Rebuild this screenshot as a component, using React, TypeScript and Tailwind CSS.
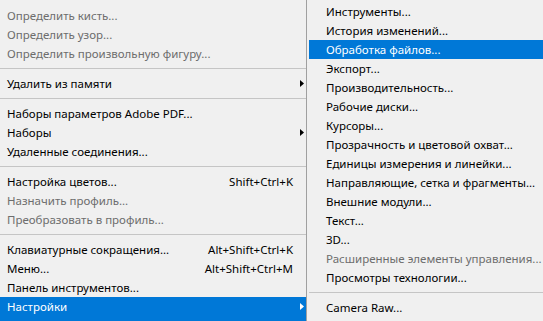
import React from "react";

type Item =
  | { sep: true }
  | { label: string; shortcut?: string; disabled?: boolean; sub?: boolean; active?: boolean; tall?: boolean };

const leftItems: Item[] = [
  { label: "Определить кисть...", disabled: true },
  { label: "Определить узор...", disabled: true },
  { label: "Определить произвольную фигуру...", disabled: true },
  { sep: true },
  { label: "Удалить из памяти", sub: true },
  { sep: true },
  { label: "Наборы параметров Adobe PDF..." },
  { label: "Наборы", sub: true },
  { label: "Удаленные соединения..." },
  { sep: true },
  { label: "Настройка цветов...", shortcut: "Shift+Ctrl+K" },
  { label: "Назначить профиль...", disabled: true },
  { label: "Преобразовать в профиль...", disabled: true },
  { sep: true },
  { label: "Клавиатурные сокращения...", shortcut: "Alt+Shift+Ctrl+K" },
  { label: "Меню...", shortcut: "Alt+Shift+Ctrl+M" },
  { label: "Панель инструментов..." },
  { label: "Настройки", sub: true, active: true, tall: true },
];

const rightItems: Item[] = [
  { label: "Инструменты..." },
  { label: "История изменений..." },
  { label: "Обработка файлов...", active: true },
  { label: "Экспорт..." },
  { label: "Производительность..." },
  { label: "Рабочие диски..." },
  { label: "Курсоры..." },
  { label: "Прозрачность и цветовой охват..." },
  { label: "Единицы измерения и линейки..." },
  { label: "Направляющие, сетка и фрагменты..." },
  { label: "Внешние модули..." },
  { label: "Текст..." },
  { label: "3D..." },
  { label: "Расширенные элементы управления...", disabled: true },
  { label: "Просмотры технологии..." },
  { sep: true },
  { label: "Camera Raw..." },
];

const Arrow = ({ white }: { white?: boolean }) => (
  <svg width="4" height="7" viewBox="0 0 4 7" className="absolute right-[2px] top-[6px]">
    <path d="M0 0 L4 3.5 L0 7 Z" fill={white ? "#ffffff" : "#000000"} />
  </svg>
);

const LeftMenu = () => (
  <div className="w-[306px] pt-[6px] flex flex-col">
    {leftItems.map((it, i) =>
      "sep" in it ? (
        <div key={i} className="h-[11px] flex items-center">
          <div className="h-px w-full bg-[#c5c5c5]" />
        </div>
      ) : (
        <div
          key={i}
          className={
            "relative flex whitespace-nowrap pl-[7px] pr-[13px] leading-[19px] " +
            (it.tall ? "h-[24px] " : "h-[19px] ") +
            (it.active ? "bg-[#0078d7] text-white" : it.disabled ? "text-[#6d6d6d]" : "text-black")
          }
        >
          <span className="flex-1">{it.label}</span>
          {it.shortcut && <span>{it.shortcut}</span>}
          {it.sub && <Arrow white={it.active} />}
        </div>
      )
    )}
  </div>
);

const RightMenu = () => (
  <div className="flex-1 pt-[2px] pl-[2px] flex flex-col">
    {rightItems.map((it, i) =>
      "sep" in it ? (
        <div key={i} className="h-[11px] flex items-center">
          <div className="h-px w-full bg-[#c5c5c5]" />
        </div>
      ) : (
        <div
          key={i}
          className={
            "h-[19px] whitespace-nowrap leading-[19px] pl-[17px] " +
            (it.active ? "bg-[#0078d7] text-white" : it.disabled ? "text-[#6d6d6d]" : "text-black")
          }
        >
          {it.label}
        </div>
      )
    )}
  </div>
);

export default function App() {
  return (
    <div
      className="w-[543px] h-[321px] overflow-hidden bg-[#f0f0f0] flex text-[11.5px]"
      style={{ fontFamily: '"Noto Sans", "Open Sans", sans-serif' }}
    >
      <LeftMenu />
      <div className="w-px bg-[#a0a0a0]" />
      <RightMenu />
    </div>
  );
}
